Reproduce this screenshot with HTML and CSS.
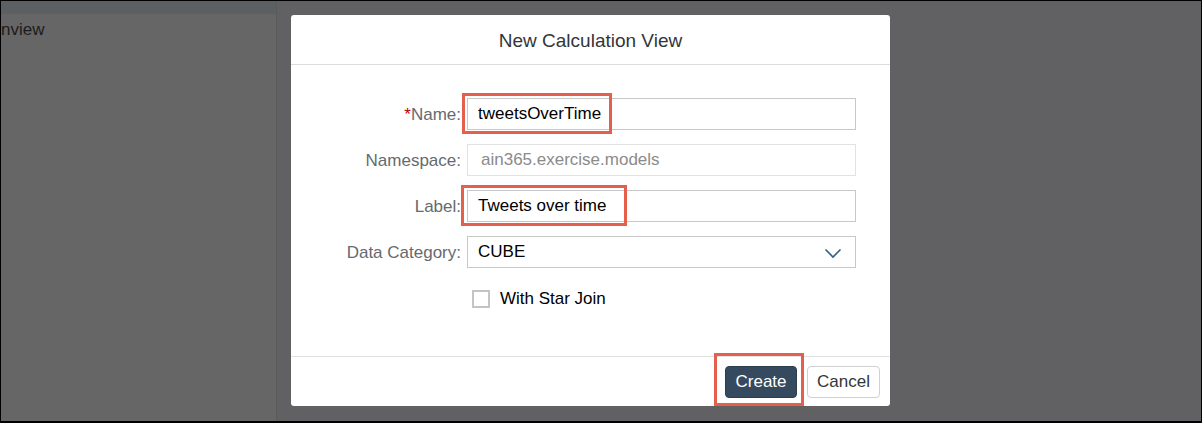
FILE: index.html
```html
<!DOCTYPE html>
<html>
<head>
<meta charset="utf-8">
<link rel="stylesheet" href="styles.css">
</head>
<body>
<div class="frame">
  <aside class="side">
    <div class="side-top"></div>
    <div class="side-title">nview</div>
  </aside>
  <main class="stage">
    <div class="dialog">
      <header class="dlg-head">New Calculation View</header>
      <section class="dlg-body">
        <div class="row">
          <label class="lbl"><span class="req">*</span>Name:</label>
          <div class="field">
            <div class="input">tweetsOverTime</div>
            <span class="mark mark-name"></span>
          </div>
        </div>
        <div class="row">
          <label class="lbl">Namespace:</label>
          <div class="field">
            <div class="input input-ro">ain365.exercise.models</div>
          </div>
        </div>
        <div class="row">
          <label class="lbl">Label:</label>
          <div class="field">
            <div class="input">Tweets over time</div>
            <span class="mark mark-label"></span>
          </div>
        </div>
        <div class="row">
          <label class="lbl">Data Category:</label>
          <div class="field">
            <div class="input select">
              <span>CUBE</span>
              <svg class="chev" width="18" height="11" viewBox="0 0 18 11"><path d="M1.5 1.5 L9 9 L16.5 1.5" fill="none" stroke="#2f5f86" stroke-width="1.6"/></svg>
            </div>
          </div>
        </div>
        <div class="row row-check">
          <span class="spacer"></span>
          <div class="check">
            <span class="box"></span>
            <span class="check-text">With Star Join</span>
          </div>
        </div>
      </section>
      <footer class="dlg-foot">
        <div class="btn-wrap">
          <button class="btn btn-primary">Create</button>
          <span class="mark mark-create"></span>
        </div>
        <button class="btn btn-default">Cancel</button>
      </footer>
    </div>
  </main>
</div>
</body>
</html>
```

FILE: styles.css
```css
* { box-sizing: border-box; }
html, body {
  margin: 0;
  padding: 0;
  background: #616163;
}
body {
  font-family: "Liberation Sans", Arial, sans-serif;
  font-size: 17px;
}
.frame {
  width: 1202px;
  height: 423px;
  border: 1px solid #000;
  border-bottom-width: 2px;
  display: flex;
  overflow: hidden;
  background: #616163;
}
.side {
  width: 276px;
  flex: none;
  background: #666666;
  border-right: 1px solid #5a5a5a;
  display: flex;
  flex-direction: column;
}
.side-top {
  height: 13px;
  background: #5c6063;
}
.side-title {
  padding-top: 6px;
  font-size: 17px;
  line-height: 20px;
  color: #1c1c1c;
}
.stage {
  flex: 1;
  padding: 14px 0 0 14px;
}
.dialog {
  width: 599px;
  height: 391px;
  background: #fff;
  border-radius: 3px;
  display: flex;
  flex-direction: column;
}
.dlg-head {
  height: 50px;
  border-bottom: 1px solid #dcdcdc;
  display: flex;
  align-items: center;
  justify-content: center;
  font-size: 19px;
  color: #32363a;
  padding-top: 2px;
}
.dlg-body {
  height: 292px;
  border-bottom: 1px solid #e2e2e2;
  padding-top: 33px;
  display: flex;
  flex-direction: column;
  gap: 14px;
}
.row {
  display: grid;
  grid-template-columns: 170px 389px;
  column-gap: 6px;
  align-items: center;
  height: 32px;
}
.lbl {
  text-align: right;
  color: #666a6e;
  font-size: 17px;
  padding-top: 2px;
}
.req {
  color: #bb0000;
}
.field {
  position: relative;
}
.input {
  height: 32px;
  border: 1px solid #c8c8c8;
  padding: 0 10px;
  display: flex;
  align-items: center;
  color: #000;
  font-size: 17px;
}
.input-ro {
  border-color: #e2e2e2;
  color: #8b8b8b;
  padding-left: 13px;
}
.select {
  justify-content: space-between;
  padding-right: 13px;
}
.chev {
  display: block;
  margin-top: 2px;
}
.mark {
  position: absolute;
  border: 3px solid #e4604c;
  pointer-events: none;
}
.mark-name {
  left: -5px;
  top: -5px;
  width: 150px;
  height: 41px;
}
.mark-label {
  left: -6px;
  top: -5px;
  width: 166px;
  height: 41px;
}
.row-check {
  margin-top: 7px;
  height: 18px;
}
.check {
  display: flex;
  align-items: center;
  gap: 10px;
  padding-left: 5px;
}
.box {
  width: 18px;
  height: 18px;
  border: 2px solid #c4c4c4;
  background: #fff;
}
.check-text {
  color: #000;
  font-size: 17px;
}
.dlg-foot {
  flex: 1;
  display: flex;
  justify-content: flex-end;
  align-items: flex-start;
  gap: 10px;
  padding: 9px 10px 0 0;
}
.btn-wrap {
  position: relative;
}
.btn {
  height: 32px;
  border-radius: 4px;
  font-family: "Liberation Sans", Arial, sans-serif;
  font-size: 17px;
  padding: 0;
  cursor: pointer;
}
.btn-primary {
  width: 72px;
  background: #354a5f;
  border: 1px solid #2c3e50;
  color: #fff;
}
.btn-default {
  width: 73px;
  background: #fff;
  border: 1px solid #d0d0d0;
  color: #32363a;
}
.mark-create {
  left: -11px;
  top: -13px;
  width: 90px;
  height: 53px;
}
```
